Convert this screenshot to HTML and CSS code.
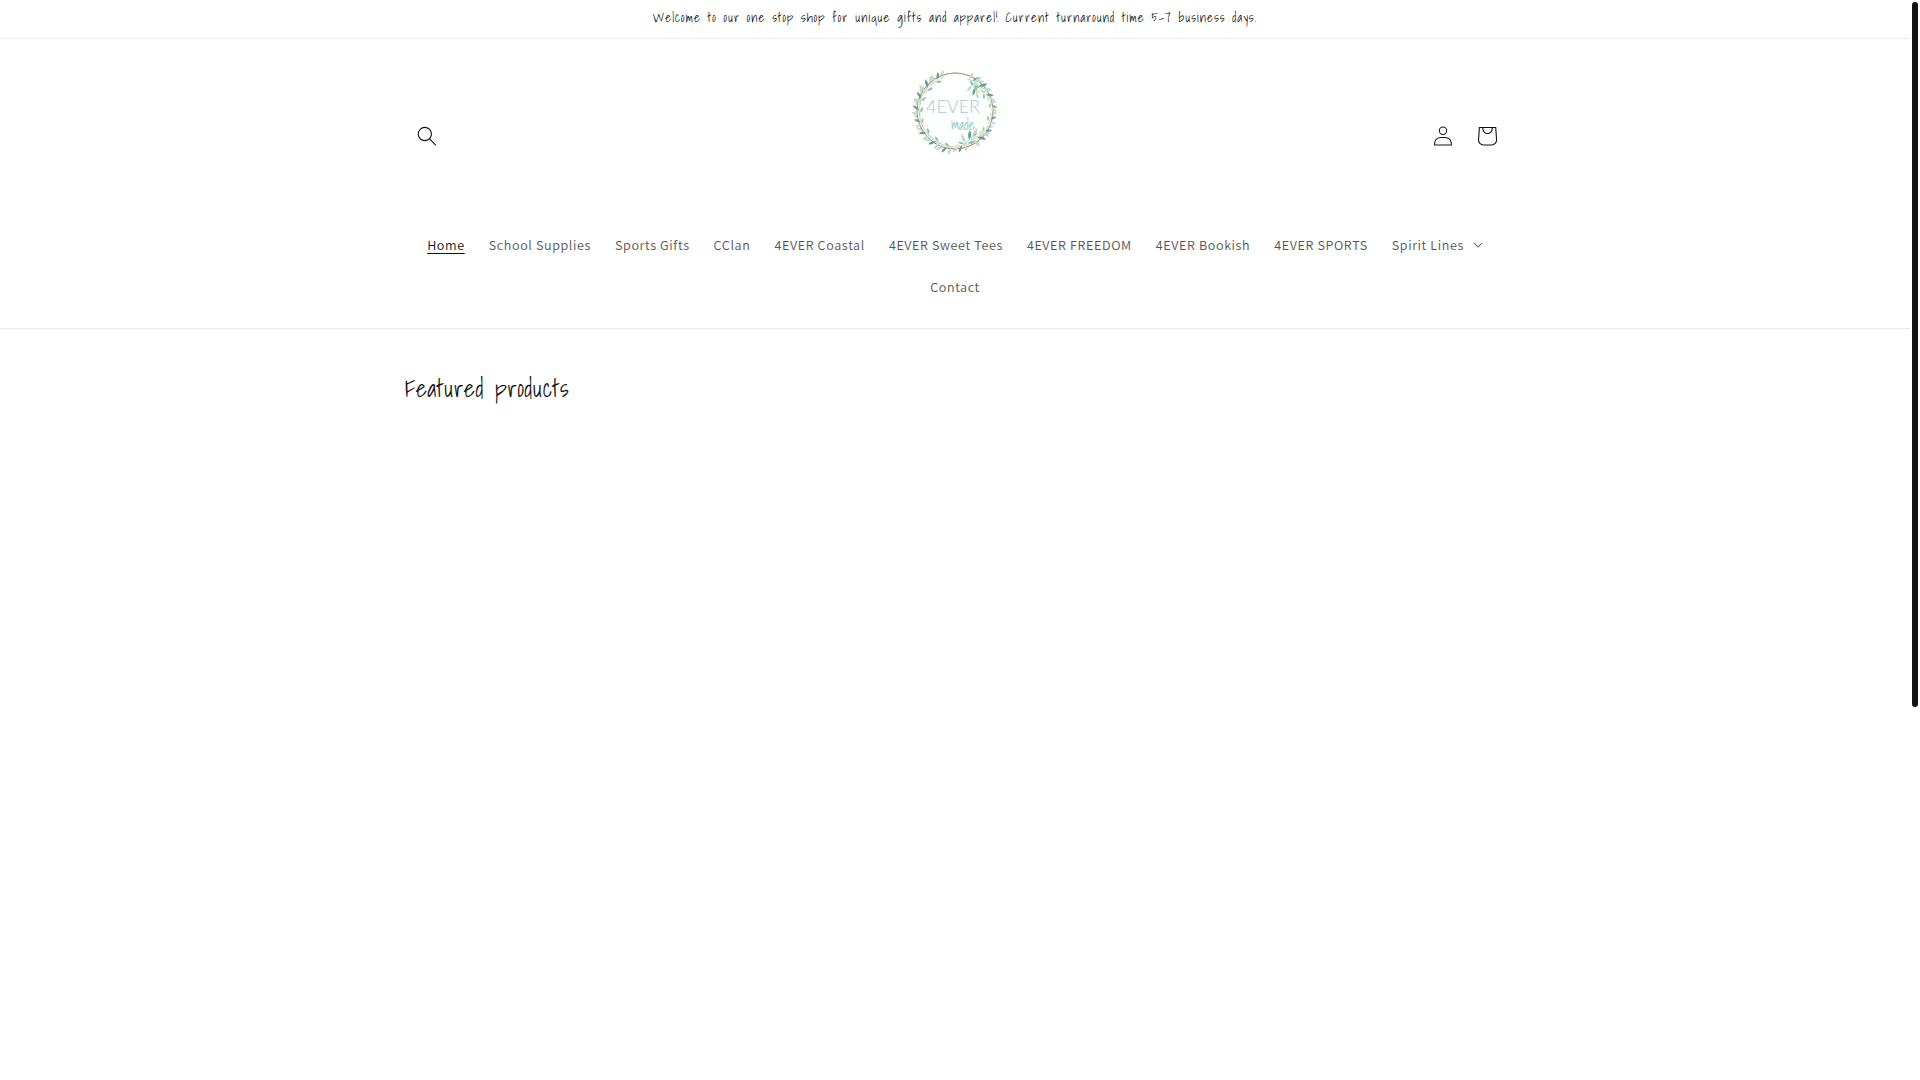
FILE: index.html
```html
<!DOCTYPE html>
<html lang="en">
	<head>
		<meta charset="utf-8">
		<meta name="viewport" content="width=device-width, initial-scale=1">
		<title>4EVER made</title>
		<link rel="stylesheet" href="styles.css">
	</head>
	<body>
		<div class="announcement-bar">
			<p class="announcement-message">Welcome to our one stop shop for unique gifts and apparel! Current turnaround time 5-7 business days.</p>
		</div>

		<header class="header">
			<div class="page-width">
				<div class="header-top">
					<button class="icon-button" type="button" aria-label="Search">
						<svg class="icon" viewBox="0 0 18 19"><path fill-rule="evenodd" d="M11.03 11.68A5.784 5.784 0 112.85 3.5a5.784 5.784 0 018.18 8.18zm.26 1.12a6.78 6.78 0 11.72-.7l5.4 5.4a.5.5 0 11-.71.7l-5.41-5.4z"/></svg>
					</button>

					<a class="logo" href="#" aria-label="4EVER made">
						<svg class="logo-image" viewBox="0 0 90 90">
							<defs>
								<g id="sprig">
									<path d="M-8 3Q0 1 10-3" fill="none" stroke="#8db5a3" stroke-width=".6"/>
									<path d="M-6 2Q-9-4-5-8Q-2-3-6 2z" fill="#bfdccf"/>
									<path d="M-1 1Q-1-4 4-7Q5-2-1 1z" fill="#5fa08d"/>
									<path d="M4-1Q7-6 12-5Q10-1 4-1z" fill="#c3ddcc"/>
									<path d="M-4 3Q-2 7 3 6Q1 2-4 3z" fill="#8cc4b3"/>
									<path d="M1 1Q5 5 9 2Q6-1 1 1z" fill="#dce6d2"/>
								</g>
							</defs>
							<circle cx="45" cy="44" r="38" fill="none" stroke="#a87958" stroke-width="1"/>
							<circle cx="46" cy="43" r="37" fill="none" stroke="#d3b294" stroke-width=".6"/>
							<use href="#sprig" transform="rotate(30 45 44) translate(46 8) scale(.8)"/>
							<use href="#sprig" transform="rotate(43 45 44) translate(46 9)"/>
							<use href="#sprig" transform="rotate(44 45 44) translate(44 15) scale(.8 -.8)"/>
							<use href="#sprig" transform="rotate(62 45 44) translate(46 8) scale(.8)"/>
							<use href="#sprig" transform="rotate(82 45 44) translate(45 6) scale(.6)"/>
							<use href="#sprig" transform="rotate(102 45 44) translate(45 7) scale(-.7 .7)"/>
							<use href="#sprig" transform="rotate(122 45 44) translate(45 7) scale(-.7 .7)"/>
							<use href="#sprig" transform="rotate(138 45 44) translate(45 9) scale(-1 1)"/>
							<use href="#sprig" transform="rotate(152 45 44) translate(45 13) scale(-1 -1)"/>
							<use href="#sprig" transform="rotate(170 45 44) translate(45 8) scale(.8)"/>
							<use href="#sprig" transform="rotate(194 45 44) translate(45 6) scale(.8)"/>
							<use href="#sprig" transform="rotate(214 45 44) translate(45 7) scale(.8)"/>
							<use href="#sprig" transform="rotate(234 45 44) translate(45 7) scale(.8)"/>
							<use href="#sprig" transform="rotate(254 45 44) translate(45 7) scale(.7)"/>
							<use href="#sprig" transform="rotate(273 45 44) translate(45 7) scale(.8)"/>
							<use href="#sprig" transform="rotate(292 45 44) translate(45 7) scale(.8)"/>
							<use href="#sprig" transform="rotate(312 45 44) translate(45 7) scale(.9)"/>
							<use href="#sprig" transform="rotate(332 45 44) translate(45 7) scale(.8)"/>
							<text class="logo-name" x="43" y="46" text-anchor="middle">4EVER</text>
							<text class="logo-script" x="53" y="63" text-anchor="middle">made</text>
						</svg>
					</a>

					<div class="header-icons">
						<a class="icon-button" href="#" aria-label="Log in">
							<svg class="icon" viewBox="0 0 18 19"><path fill-rule="evenodd" d="M6 4.5a3 3 0 116 0 3 3 0 01-6 0zm3-4a4 4 0 100 8 4 4 0 000-8zm5.58 12.15c1.12.82 1.83 2.24 1.91 4.85H1.51c.08-2.6.79-4.03 1.9-4.85C4.66 11.75 6.5 11.5 9 11.5s4.35.26 5.58 1.15zM9 10.5c-2.5 0-4.65.24-6.17 1.35C1.27 12.98.5 14.93.5 18v.5h17V18c0-3.07-.77-5.02-2.33-6.15-1.52-1.1-3.67-1.35-6.17-1.35z"/></svg>
						</a>
						<a class="icon-button" href="#" aria-label="Cart">
							<svg class="icon-cart" viewBox="0 0 40 40"><path fill-rule="evenodd" d="M15.75 11.8h-3.16l-.77 11.6a5 5 0 004.99 5.34h7.38a5 5 0 004.99-5.33L28.4 11.8zm0 1h-2.22l-.71 10.67a4 4 0 003.99 4.27h7.38a4 4 0 004-4.27l-.72-10.67h-2.22v.63a4.75 4.75 0 11-9.5 0zm8.5 0h-7.5v.63a3.75 3.75 0 107.5 0z"/></svg>
						</a>
					</div>
				</div>

				<nav>
					<ul class="menu">
						<li><a class="menu-item active" href="#" aria-current="page"><span>Home</span></a></li>
						<li><a class="menu-item" href="#">School Supplies</a></li>
						<li><a class="menu-item" href="#">Sports Gifts</a></li>
						<li><a class="menu-item" href="#">CClan</a></li>
						<li><a class="menu-item" href="#">4EVER Coastal</a></li>
						<li><a class="menu-item" href="#">4EVER Sweet Tees</a></li>
						<li><a class="menu-item" href="#">4EVER FREEDOM</a></li>
						<li><a class="menu-item" href="#">4EVER Bookish</a></li>
						<li><a class="menu-item" href="#">4EVER SPORTS</a></li>
						<li>
							<button class="menu-item menu-toggle" type="button" aria-expanded="false">Spirit Lines
								<svg class="icon-caret" viewBox="0 0 10 6"><path d="M9.354.646a.5.5 0 00-.708 0L5 4.293 1.354.646a.5.5 0 00-.708.708l4 4a.5.5 0 00.708 0l4-4a.5.5 0 000-.708z"/></svg>
							</button>
						</li>
						<li><a class="menu-item" href="#">Contact</a></li>
					</ul>
				</nav>
			</div>
		</header>

		<main class="page-width">
			<h2 class="section-title">Featured products</h2>
		</main>

		<div class="scrollbar" aria-hidden="true"></div>
	</body>
</html>
```
FILE: styles.css
```css
*{
	box-sizing: border-box;
}
body{
	margin: 0;
	padding-right: 10px; /* room for the scrollbar */
	min-height: 100vh;
	background-color: #fff;
	color: #121212;
	font-family: "Assistant", "Noto Sans CJK SC", sans-serif;
}
.page-width{
	max-width: 1200px;
	margin: 0 auto;
	padding: 0 50px;
}

/* announcement */
.announcement-bar{
	border-bottom: 1px solid #ebebeb;
	text-align: center;
}
.announcement-message{
	margin: 0;
	padding: 7px 0 9px;
	font-family: "Shadows Into Light", cursive;
	font-size: 13px;
	font-weight: 400;
	line-height: 22px;
	letter-spacing: 0.075em;
}

/* header */
.header{
	padding: 20px 0;
	border-bottom: 1px solid #ebebeb;
}
.header-top{
	display: grid;
	grid-template-columns: 1fr auto 1fr;
	align-items: center;
	margin-bottom: 11px;
}
.icon-button{
	display: flex;
	align-items: center;
	justify-content: center;
	width: 44px;
	height: 44px;
	padding: 0;
	border: 0;
	background: none;
	color: #121212;
	cursor: pointer;
}
.icon{
	width: 20px;
	height: 20px;
	fill: currentColor;
}
.icon-cart{
	width: 44px;
	height: 44px;
	fill: currentColor;
}
.header-icons{
	display: flex;
	justify-content: flex-end;
	margin-right: -4px;
}
.logo{
	padding: 8px 0 56px;
}
.logo-image{
	display: block;
	width: 90px;
	height: 90px;
}
.logo-name{
	font-family: Lato, sans-serif;
	font-size: 18px;
	font-weight: 300;
	fill: #9bd3c6;
}
.logo-script{
	font-family: "Shadows Into Light", cursive;
	font-size: 14px;
	fill: #8cc9bb;
}

/* menu */
.menu{
	display: flex;
	flex-wrap: wrap;
	justify-content: center;
	margin: 0;
	padding: 0;
	list-style: none;
}
.menu-item{
	display: block;
	padding: 12px;
	border: 0;
	background: none;
	color: #555;
	font-family: inherit;
	font-size: 14px;
	line-height: 18px;
	letter-spacing: 0.045em;
	text-decoration: none;
	cursor: pointer;
}
.menu-item:hover{
	text-decoration: underline;
}
.active{
	color: #121212;
}
.active span{
	text-decoration: underline;
	text-underline-offset: 3px;
}
.menu-toggle{
	display: flex;
	align-items: center;
	gap: 9px;
}
.icon-caret{
	width: 10px;
	height: 6px;
	fill: currentColor;
}

/* products */
.section-title{
	margin: 0;
	padding: 44px 0;
	font-family: "Shadows Into Light", cursive;
	font-size: 24px;
	font-weight: 400;
	line-height: 31px;
	letter-spacing: 0.025em;
}

.scrollbar{
	position: fixed;
	top: 2px;
	right: 2px;
	width: 6px;
	height: 65.3vh;
	border-radius: 3px;
	background-color: #121212;
}
```
